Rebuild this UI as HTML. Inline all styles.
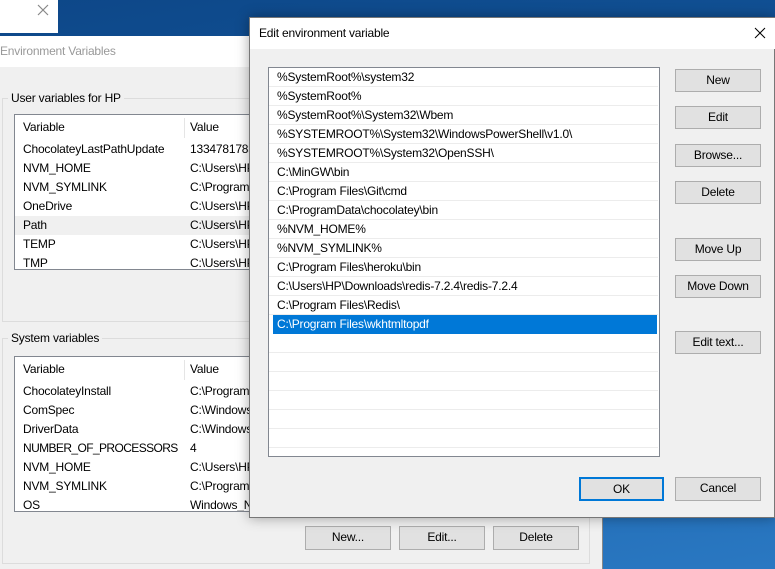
<!DOCTYPE html><html><head><style>
*{margin:0;padding:0;box-sizing:border-box}
body{width:775px;height:569px;overflow:hidden;position:relative;font-family:"Liberation Sans",sans-serif;font-size:12px;letter-spacing:-0.2px;color:#000;background:linear-gradient(170deg,#0d4788 0%,#14589e 40%,#2a78c2 100%)}
.a{position:absolute}
.btn{position:absolute;background:#e1e1e1;border:1px solid #adadad;text-align:center;line-height:21px;font-size:12px}
.row{position:absolute;left:0;height:19px;line-height:19px;white-space:nowrap}
</style></head><body>
<div class="a" style="left:0;top:0;width:58px;height:33px;background:#fff"></div>
<svg class="a" style="left:37px;top:4px" width="12" height="12"><path d="M1 1L11 11M11 1L1 11" stroke="#888" stroke-width="1.2"/></svg>
<!-- env dialog -->
<div class="a" style="left:0;top:36px;width:603px;height:533px;background:#f0f0f0;border-right:1px solid #888">
 <div class="a" style="left:0;top:0;width:602px;height:31px;background:#fff"></div>
 <div class="a" style="left:0;top:8px;color:#999;font-size:12px">Environment Variables</div>
 <div class="a" style="left:2px;top:62px;width:588px;height:224px;border:1px solid #dcdcdc"></div>
 <div class="a" style="left:8px;top:55px;background:#f0f0f0;padding:0 3px">User variables for HP</div>
 <div class="a" style="left:14px;top:78px;width:250px;height:156px;background:#fff;border:1px solid #828790;overflow:hidden">
  <div class="row" style="top:3px;left:8px">Variable</div><div class="a" style="left:169px;top:3px;width:1px;height:20px;background:#e5e5e5"></div><div class="row" style="top:3px;left:175px">Value</div>
  <div class="row" style="top:25px;left:8px">ChocolateyLastPathUpdate</div><div class="row" style="top:25px;left:175px">133478178312</div>
  <div class="row" style="top:44px;left:8px">NVM_HOME</div><div class="row" style="top:44px;left:175px">C:\Users\HP</div>
  <div class="row" style="top:63px;left:8px">NVM_SYMLINK</div><div class="row" style="top:63px;left:175px">C:\Program</div>
  <div class="row" style="top:82px;left:8px">OneDrive</div><div class="row" style="top:82px;left:175px">C:\Users\HP</div>
  <div class="a" style="top:101px;left:0;width:250px;height:19px;background:#f0f0f0"></div>
  <div class="row" style="top:101px;left:8px">Path</div><div class="row" style="top:101px;left:175px">C:\Users\HP</div>
  <div class="row" style="top:120px;left:8px">TEMP</div><div class="row" style="top:120px;left:175px">C:\Users\HP</div>
  <div class="row" style="top:139px;left:8px">TMP</div><div class="row" style="top:139px;left:175px">C:\Users\HP</div>
 </div>
 <div class="a" style="left:2px;top:302px;width:588px;height:226px;border:1px solid #dcdcdc"></div>
 <div class="a" style="left:8px;top:295px;background:#f0f0f0;padding:0 3px">System variables</div>
 <div class="a" style="left:14px;top:320px;width:250px;height:156px;background:#fff;border:1px solid #828790;overflow:hidden">
  <div class="row" style="top:3px;left:8px">Variable</div><div class="a" style="left:169px;top:3px;width:1px;height:20px;background:#e5e5e5"></div><div class="row" style="top:3px;left:175px">Value</div>
  <div class="row" style="top:25px;left:8px">ChocolateyInstall</div><div class="row" style="top:25px;left:175px">C:\Program</div>
  <div class="row" style="top:44px;left:8px">ComSpec</div><div class="row" style="top:44px;left:175px">C:\Windows</div>
  <div class="row" style="top:63px;left:8px">DriverData</div><div class="row" style="top:63px;left:175px">C:\Windows</div>
  <div class="row" style="top:82px;left:8px;letter-spacing:-0.6px">NUMBER_OF_PROCESSORS</div><div class="row" style="top:82px;left:175px">4</div>
  <div class="row" style="top:101px;left:8px">NVM_HOME</div><div class="row" style="top:101px;left:175px">C:\Users\HP</div>
  <div class="row" style="top:120px;left:8px">NVM_SYMLINK</div><div class="row" style="top:120px;left:175px">C:\Program</div>
  <div class="row" style="top:139px;left:8px">OS</div><div class="row" style="top:139px;left:175px">Windows_NT</div>
 </div>
 <div class="btn" style="left:305px;top:490px;width:86px;height:24px">New...</div>
 <div class="btn" style="left:399px;top:490px;width:86px;height:24px">Edit...</div>
 <div class="btn" style="left:493px;top:490px;width:86px;height:24px">Delete</div>
</div>
<!-- edit dialog -->
<div class="a" style="left:249px;top:17px;width:526px;height:501px;background:#f0f0f0;border:1px solid #777;box-shadow:0 0 12px rgba(0,0,0,.35)">
 <div class="a" style="left:0;top:0;width:525px;height:31px;background:#fff"></div>
 <div class="a" style="left:9px;top:8px">Edit environment variable</div>
 <svg class="a" style="left:504px;top:9px" width="12" height="12"><path d="M1 1L11 11M11 1L1 11" stroke="#000" stroke-width="1"/></svg>
 <div class="a" style="left:18px;top:49px;width:392px;height:390px;background:#fff;border:1px solid #828790;overflow:hidden"></div>
 <div class="btn" style="left:425px;top:51px;width:86px;height:23px">New</div>
 <div class="btn" style="left:425px;top:88px;width:86px;height:23px">Edit</div>
 <div class="btn" style="left:425px;top:126px;width:86px;height:23px">Browse...</div>
 <div class="btn" style="left:425px;top:163px;width:86px;height:23px">Delete</div>
 <div class="btn" style="left:425px;top:220px;width:86px;height:23px">Move Up</div>
 <div class="btn" style="left:425px;top:257px;width:86px;height:23px">Move Down</div>
 <div class="btn" style="left:425px;top:313px;width:86px;height:23px">Edit text...</div>
 <div class="btn" style="left:329px;top:459px;width:85px;height:24px;border:2px solid #0078d7;line-height:20px">OK</div>
 <div class="btn" style="left:425px;top:459px;width:86px;height:24px">Cancel</div>
</div>
<div class="a" style="left:268px;top:67px;width:392px;height:390px;overflow:hidden">
<div style="position:absolute;left:1px;top:1px;width:389px">
<div class="row" style="top:0;width:389px;border-bottom:1px solid #ececec;padding-left:8px">%SystemRoot%\system32</div>
<div class="row" style="top:19px;width:389px;border-bottom:1px solid #ececec;padding-left:8px">%SystemRoot%</div>
<div class="row" style="top:38px;width:389px;border-bottom:1px solid #ececec;padding-left:8px">%SystemRoot%\System32\Wbem</div>
<div class="row" style="top:57px;width:389px;border-bottom:1px solid #ececec;padding-left:8px">%SYSTEMROOT%\System32\WindowsPowerShell\v1.0\</div>
<div class="row" style="top:76px;width:389px;border-bottom:1px solid #ececec;padding-left:8px">%SYSTEMROOT%\System32\OpenSSH\</div>
<div class="row" style="top:95px;width:389px;border-bottom:1px solid #ececec;padding-left:8px">C:\MinGW\bin</div>
<div class="row" style="top:114px;width:389px;border-bottom:1px solid #ececec;padding-left:8px">C:\Program Files\Git\cmd</div>
<div class="row" style="top:133px;width:389px;border-bottom:1px solid #ececec;padding-left:8px">C:\ProgramData\chocolatey\bin</div>
<div class="row" style="top:152px;width:389px;border-bottom:1px solid #ececec;padding-left:8px">%NVM_HOME%</div>
<div class="row" style="top:171px;width:389px;border-bottom:1px solid #ececec;padding-left:8px">%NVM_SYMLINK%</div>
<div class="row" style="top:190px;width:389px;border-bottom:1px solid #ececec;padding-left:8px">C:\Program Files\heroku\bin</div>
<div class="row" style="top:209px;width:389px;border-bottom:1px solid #ececec;padding-left:8px">C:\Users\HP\Downloads\redis-7.2.4\redis-7.2.4</div>
<div class="row" style="top:228px;width:389px;border-bottom:1px solid #ececec;padding-left:8px">C:\Program Files\Redis\</div>
<div class="row" style="top:247px;width:384px;left:4px;background:#0078d7;color:#fff;padding-left:4px">C:\Program Files\wkhtmltopdf</div>
<div class="row" style="top:266px;width:389px;border-bottom:1px solid #ececec"></div>
<div class="row" style="top:285px;width:389px;border-bottom:1px solid #ececec"></div>
<div class="row" style="top:304px;width:389px;border-bottom:1px solid #ececec"></div>
<div class="row" style="top:323px;width:389px;border-bottom:1px solid #ececec"></div>
<div class="row" style="top:342px;width:389px;border-bottom:1px solid #ececec"></div>
<div class="row" style="top:361px;width:389px;border-bottom:1px solid #ececec"></div>
</div></div>
</body></html>
